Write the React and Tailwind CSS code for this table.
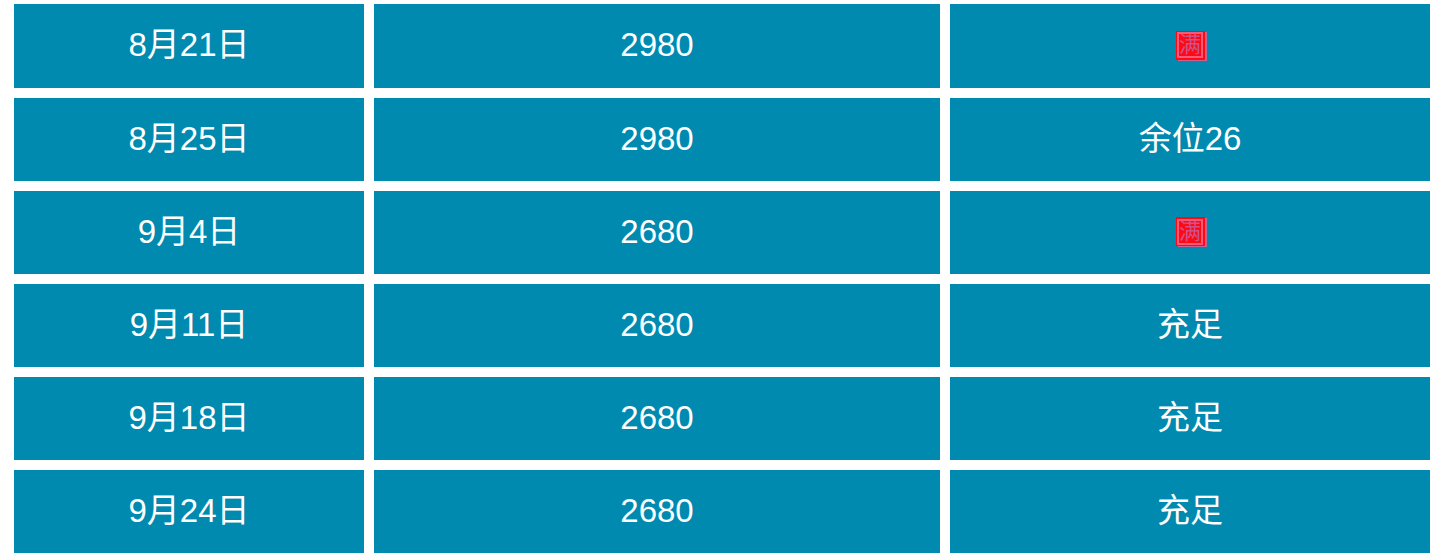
import React from 'react';

const rows = [
  { date: '8月21日', price: '2980', left: 'full' },
  { date: '8月25日', price: '2980', left: '余位26' },
  { date: '9月4日', price: '2680', left: 'full' },
  { date: '9月11日', price: '2680', left: '充足' },
  { date: '9月18日', price: '2680', left: '充足' },
  { date: '9月24日', price: '2680', left: '充足' },
];

function FullBadge() {
  return (
    <span className="inline-flex w-[29px] h-[29px] items-center justify-center bg-[#ff0a14] shadow-[2px_1px_0_#c86090]">
      <span className="flex w-[26px] h-[26px] items-center justify-center border-2 border-[#f85a78] text-[#d0508a] text-[22px] leading-none">
        满
      </span>
    </span>
  );
}

function Cell({ children, first }) {
  return (
    <div
      className={
        first
          ? 'h-[84px] bg-[#008ab0] flex items-center justify-center pb-[2px]'
          : 'h-[83px] bg-[#008ab0] flex items-center justify-center pb-[2px]'
      }
    >
      {children}
    </div>
  );
}

export default function App() {
  return (
    <div
      className="bg-white w-[1441px] h-[559px] pl-[14px] pt-[4px] text-white text-[33px]"
      style={{ fontFamily: '"Liberation Sans", Arial, "Noto Sans CJK SC", sans-serif' }}
    >
      <div className="grid grid-cols-[350px_566px_480px] gap-[10px]">
        {rows.map((r, i) => (
          <React.Fragment key={i}>
            <Cell first={i === 0}>{r.date}</Cell>
            <Cell first={i === 0}>{r.price}</Cell>
            <Cell first={i === 0}>{r.left === 'full' ? <FullBadge /> : r.left}</Cell>
          </React.Fragment>
        ))}
      </div>
    </div>
  );
}
